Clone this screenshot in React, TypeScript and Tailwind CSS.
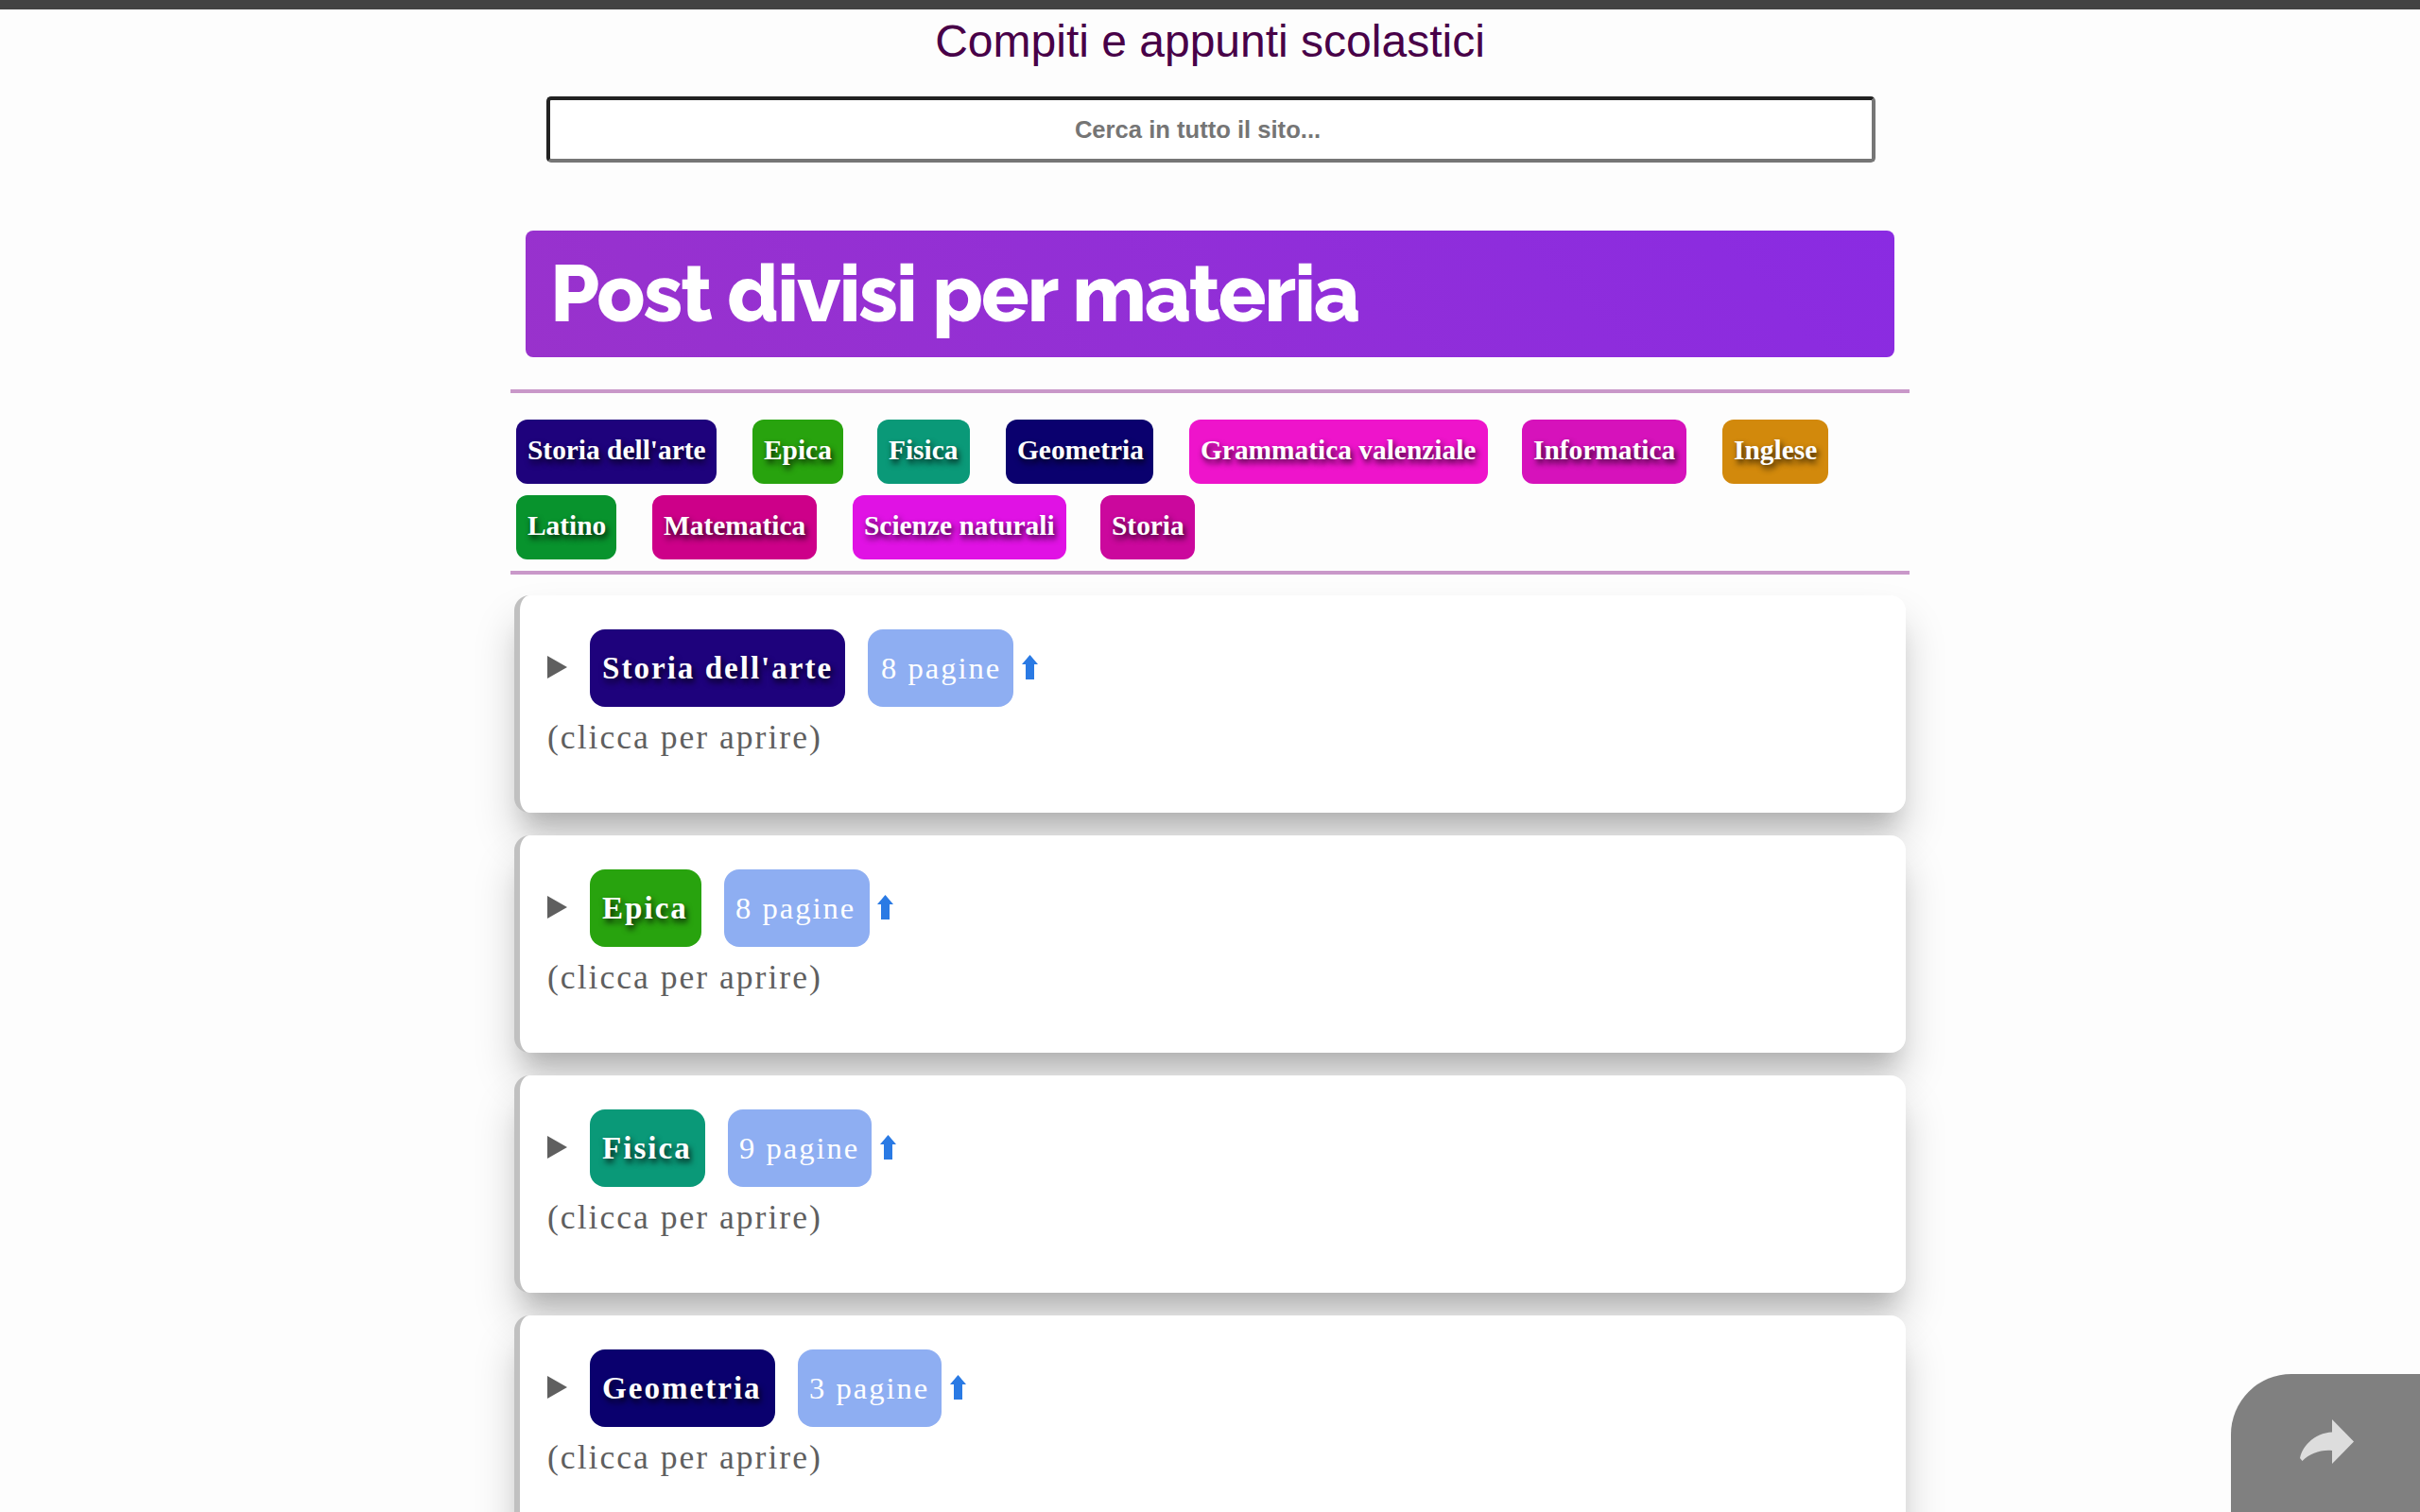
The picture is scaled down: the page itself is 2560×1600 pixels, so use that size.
const subjects = [
  { name: "Storia dell'arte", bg: 'bg-[#1e027c]', w: 'w-[212px]', mr: 'mr-[38px]' },
  { name: 'Epica', bg: 'bg-[#28a30e]', w: 'w-[96px]', mr: 'mr-[36px]' },
  { name: 'Fisica', bg: 'bg-[#0a9978]', w: 'w-[98px]', mr: 'mr-[38px]' },
  { name: 'Geometria', bg: 'bg-[#0a006e]', w: 'w-[156px]', mr: 'mr-[38px]' },
  { name: 'Grammatica valenziale', bg: 'bg-[#ee14cb]', w: 'w-[316px]', mr: 'mr-[36px]' },
  { name: 'Informatica', bg: 'bg-[#d612bb]', w: 'w-[174px]', mr: 'mr-[38px]' },
  { name: 'Inglese', bg: 'bg-[#d2890c]', w: 'w-[112px]', mr: 'mr-[38px]' },
  { name: 'Latino', bg: 'bg-[#08932d]', w: 'w-[106px]', mr: 'mr-[38px]' },
  { name: 'Matematica', bg: 'bg-[#cd0089]', w: 'w-[174px]', mr: 'mr-[38px]' },
  { name: 'Scienze naturali', bg: 'bg-[#e012e4]', w: 'w-[226px]', mr: 'mr-[36px]' },
  { name: 'Storia', bg: 'bg-[#cb089d]', w: 'w-[100px]', mr: '' },
];

const cards = [
  { name: "Storia dell'arte", pages: 8, bg: 'bg-[#1e027c]', w: 'w-[270px]', pw: 'w-[154px]', pl: 'pl-[14px]', gap: 'ml-[9px]' },
  { name: 'Epica', pages: 8, bg: 'bg-[#28a30e]', w: 'w-[118px]', pw: 'w-[154px]', pl: 'pl-[12px]', gap: 'ml-[8px]' },
  { name: 'Fisica', pages: 9, bg: 'bg-[#0a9978]', w: 'w-[122px]', pw: 'w-[152px]', pl: 'pl-[12px]', gap: 'ml-[9px]' },
  { name: 'Geometria', pages: 3, bg: 'bg-[#0a006e]', w: 'w-[196px]', pw: 'w-[152px]', pl: 'pl-[12px]', gap: 'ml-[9px]' },
];

function Header() {
  return (
    <header className="flex h-[244px] flex-col items-center border-t-[10px] border-[#434343] font-['Liberation_Sans',sans-serif]">
      <h1 className="mt-[6px] text-[48px] leading-[56px] text-[#480048]">Compiti e appunti scolastici</h1>
      <input
        type="text"
        placeholder="Cerca in tutto il sito..."
        className="mt-[30px] ml-[2px] h-[70px] w-[1406px] rounded-[5px] border-4 border-t-[#222] border-r-[#767676] border-b-[#767676] border-l-[#222] bg-white pr-[28px] text-center text-[25.6px] font-bold placeholder:text-[#757575]"
      />
    </header>
  );
}

function Card({ c }: { c: (typeof cards)[number] }) {
  return (
    <section className="ml-1 h-[230px] w-[1472px] rounded-[16px] border-l-[6px] border-[#c0c0c0] bg-white pt-9 pl-[29px] text-[35.6px] tracking-[2px] text-[#5f5f5f] shadow-[0_28px_44px_rgba(0,0,0,0.18),0_24px_24px_-12px_rgba(0,0,0,0.16)]">
      <div className="flex h-[82px] items-center">
        <svg className="h-6 w-[21px] -translate-y-px" viewBox="0 0 21 24" fill="#5f5f5f"><path d="M0 0L21 12L0 24Z" /></svg>
        <span className={`ml-[24px] h-[82px] rounded-[16px] pl-[13px] text-[33.1px] leading-[83px] font-bold whitespace-nowrap text-white [text-shadow:2px_4px_6px_rgba(0,0,0,0.8)] ${c.bg} ${c.w}`}>{c.name}</span>
        <span className={`ml-6 h-[82px] rounded-[16px] bg-[#8eaef2] text-[32.6px] leading-[83px] whitespace-nowrap text-white ${c.pl} ${c.pw}`}>{c.pages} pagine</span>
        <svg className={`h-[26px] w-[17px] -translate-y-px ${c.gap}`} viewBox="0 0 17 26" fill="#2a7ae4"><path d="M8.5 0L17 10H13V26H4V10H0Z" /></svg>
      </div>
      <p className="mt-[11px] leading-[42px]">(clicca per aprire)</p>
    </section>
  );
}

export default function App() {
  return (
    <div className="relative h-[1600px] w-[2560px] overflow-hidden bg-[#fdfdfd] font-['Liberation_Serif',serif]">
      <Header />
      <main className="mx-auto w-[1480px]">
        <h2 className="mx-4 h-[134px] rounded-[8px] bg-[linear-gradient(45deg,#9932cc,#8a2be2)] pl-[26px] font-['Raleway',sans-serif] text-[84px] leading-[134px] font-extrabold tracking-[-2px] text-white">
          Post divisi per materia
        </h2>
        <div className="mt-[34px] flex h-[196px] flex-wrap content-start gap-y-3 border-y-4 border-[#c998c9] pt-7 pl-[6px] text-[29.4px] leading-[64px] font-bold text-white">
          {subjects.map((s) => (
            <span key={s.name} className={`h-[68px] rounded-[12px] pl-[12px] whitespace-nowrap [text-shadow:2px_4px_6px_rgba(0,0,0,0.8)] ${s.bg} ${s.w} ${s.mr}`}>{s.name}</span>
          ))}
        </div>
        <div className="mt-[22px] flex flex-col gap-6">
          {cards.map((c) => <Card key={c.name} c={c} />)}
        </div>
      </main>
      <button aria-label="Condividi" className="absolute right-0 bottom-0 flex h-[146px] w-[200px] items-start rounded-tl-[64px] bg-[#808080] pt-[48px] pl-[73px]">
        <svg className="h-[47px] w-[57px]" viewBox="0 0 57 47" fill="#ddd"><path d="M34 0L57 23.500L34 47V33C21 32 11 36 2.500 44L0 41C3 26 18 14 34 13.500Z" /></svg>
      </button>
    </div>
  );
}
